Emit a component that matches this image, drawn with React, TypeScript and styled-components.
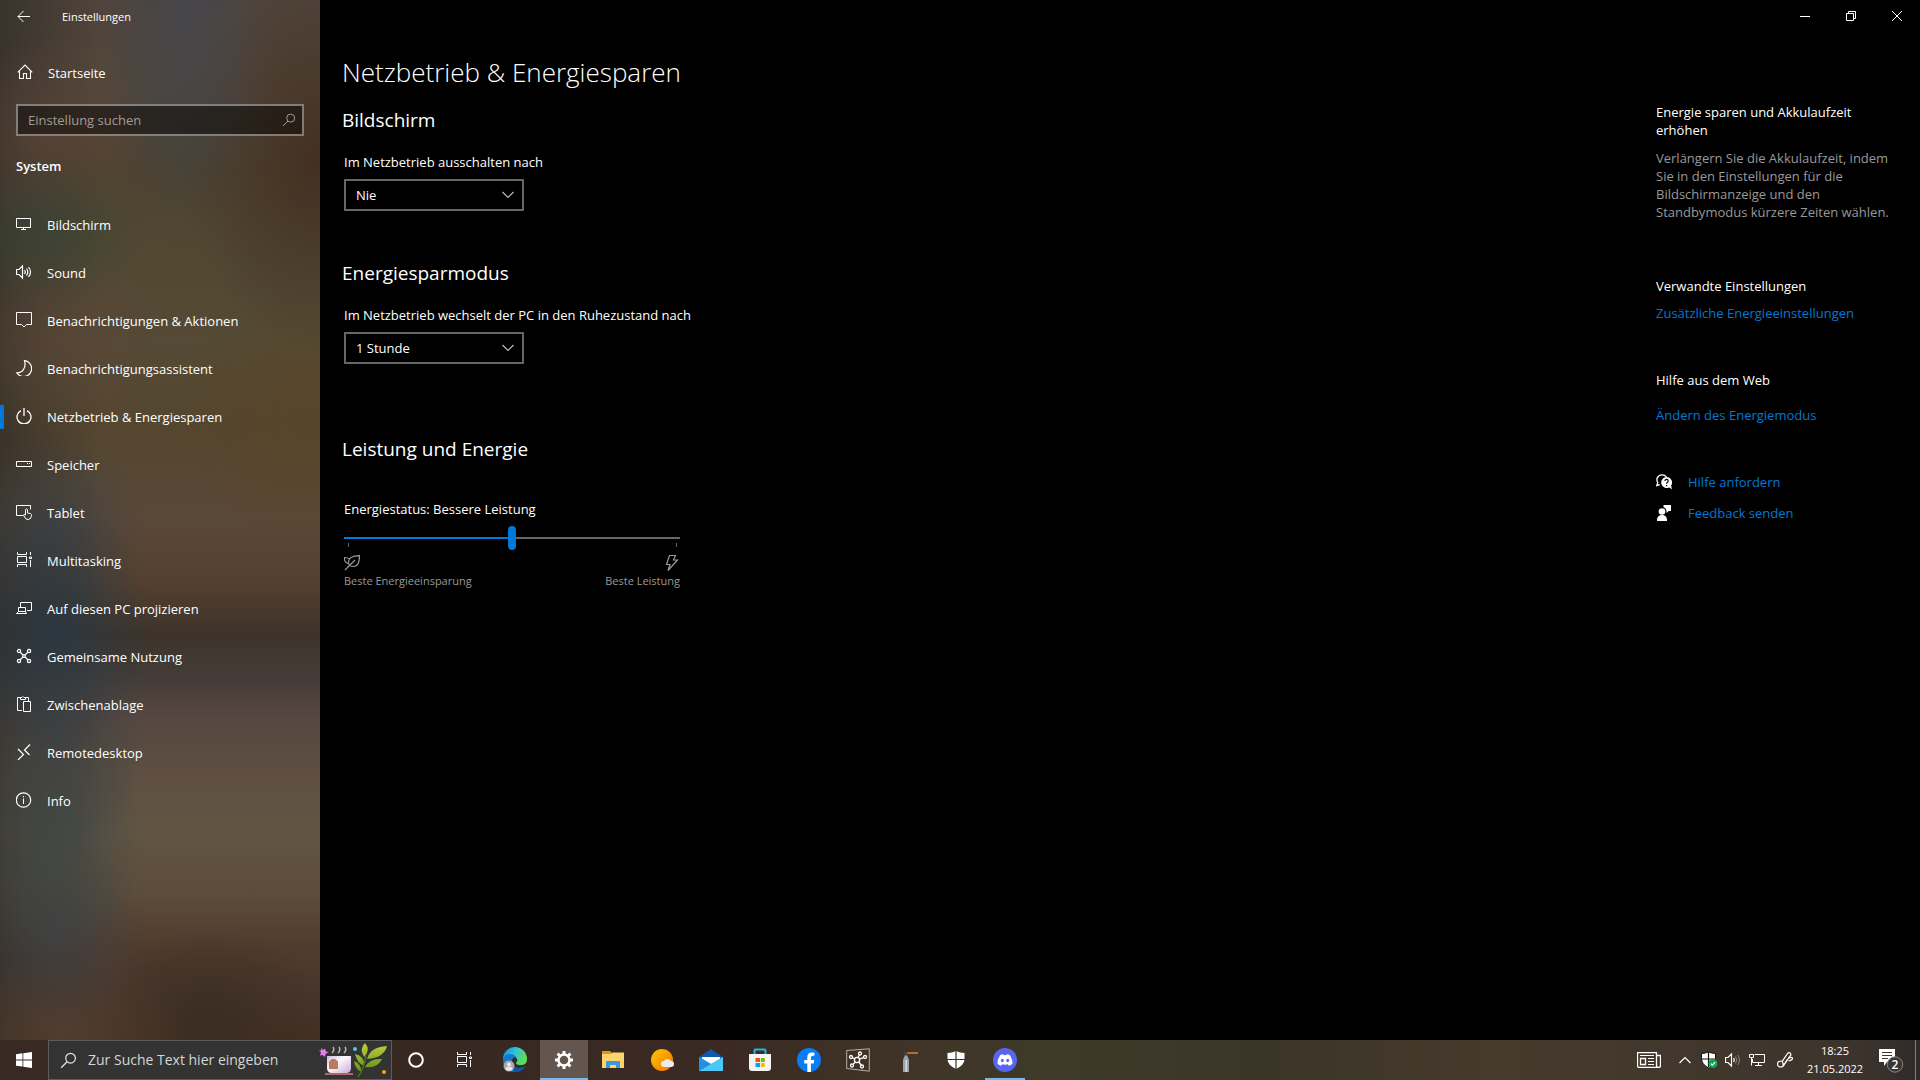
import React, { useState } from 'react';
import styled, { createGlobalStyle, css } from 'styled-components';

const accent = '#0078d7';

const GlobalStyle = createGlobalStyle`
  *, *::before, *::after { box-sizing: border-box; }
  html, body { margin: 0; background: #000; }
  body, button, input, select {
    font-family: 'Open Sans', 'Noto Sans', 'Liberation Sans', sans-serif;
    font-size: 13px;
    line-height: 18px;
    color: #fff;
  }
  h1, h2, h3, p, ul { margin: 0; padding: 0; }
  ul { list-style: none; }
  svg { display: block; flex: none; }
`;

const Desktop = styled.div`
  min-height: 100vh;
  display: flex;
  flex-direction: column;
`;

const SettingsWindow = styled.div`
  flex: 1;
  display: flex;
  background: #000;
`;

/* ---------- navigation pane ---------- */

const Pane = styled.aside`
  width: 320px;
  flex: none;
  background:
    radial-gradient(ellipse 90px 180px at 185px 0, rgba(68, 70, 78, 0.85), transparent),
    radial-gradient(ellipse 90px 120px at 185px 130px, rgba(62, 66, 62, 0.6), transparent),
    radial-gradient(ellipse 100px 80px at 50px 230px, rgba(58, 68, 54, 0.75), transparent),
    radial-gradient(ellipse 100px 100px at 50px 140px, rgba(92, 68, 56, 0.7), transparent),
    radial-gradient(ellipse 100px 110px at 60px 340px, rgba(92, 70, 56, 0.7), transparent),
    radial-gradient(ellipse 100px 130px at 52px 625px, rgba(42, 56, 68, 0.9), transparent),
    radial-gradient(ellipse 90px 90px at 55px 525px, rgba(60, 66, 70, 0.7), transparent),
    radial-gradient(ellipse 90px 120px at 58px 740px, rgba(62, 66, 66, 0.8), transparent),
    radial-gradient(ellipse 90px 120px at 55px 835px, rgba(64, 72, 70, 0.85), transparent),
    radial-gradient(ellipse 90px 100px at 55px 930px, rgba(62, 66, 68, 0.85), transparent),
    radial-gradient(ellipse 130px 80px at 60px 1030px, rgba(84, 62, 48, 0.9), transparent),
    radial-gradient(ellipse 120px 90px at 210px 1020px, rgba(56, 44, 32, 0.8), transparent),
    radial-gradient(ellipse 140px 190px at 320px 160px, rgba(64, 44, 32, 0.85), transparent),
    radial-gradient(ellipse 130px 130px at 310px 420px, rgba(90, 68, 40, 0.8), transparent),
    linear-gradient(90deg, rgba(44, 42, 38, 0.65), transparent 100px),
    linear-gradient(
      #50443a 0, #54473a 9%, #51432f 16%, #514832 24%, #544a35 33%, #54462f 41%,
      #5a4838 50%, #54402f 56%, #3d332a 61%, #443c38 65%, #564740 69%, #5f5042 75%,
      #625542 80%, #5c4c3a 86%, #513b2e 91%, #47342a 96%, #442f23 100%
    );
`;

const PaneTitle = styled.div`
  height: 34px;
  display: flex;
  align-items: center;
  font-size: 11px;
`;

const BackButton = styled.button`
  width: 62px;
  height: 32px;
  padding: 0 0 0 17px;
  border: 0;
  background: none;
`;

const navRow = css`
  position: relative;
  display: flex;
  align-items: center;
  gap: 15px;
  height: 48px;
  padding: 0 16px;
  color: #fff;
  text-decoration: none;

  svg { margin-bottom: 2px; }
`;

const HomeLink = styled.a`
  ${navRow}
  margin-top: 15px;
  padding-left: 17px;
`;

const PaneSearch = styled.label`
  display: flex;
  align-items: center;
  height: 32px;
  margin: 7px 16px 20px;
  padding: 0 6px 0 10px;
  border: 2px solid rgba(255, 255, 255, 0.42);
  background: rgba(0, 0, 0, 0.45);
`;

const PlainInput = styled.input`
  flex: 1;
  min-width: 0;
  padding: 0;
  border: 0;
  outline: 0;
  background: none;

  &::placeholder { color: #a19c97; opacity: 1; }
`;

const PaneHeading = styled.h2`
  margin: 0 16px 25px;
  font-size: 13px;
  line-height: 20px;
  font-weight: 600;
`;

const NavLink = styled.a<{ $active?: boolean }>`
  ${navRow}

  &::before {
    content: '';
    position: absolute;
    left: 0;
    top: 12px;
    width: 4px;
    height: 24px;
    background: ${p => (p.$active ? accent : 'transparent')};
  }
`;

/* ---------- content ---------- */

const Content = styled.main`
  flex: 1;
  display: flex;
  flex-direction: column;
`;

const Caption = styled.div`
  display: flex;
  justify-content: flex-end;
  height: 32px;
`;

const CaptionButton = styled.button`
  width: 46px;
  display: grid;
  place-items: center;
  padding: 0;
  border: 0;
  background: none;
`;

const Columns = styled.div`
  display: flex;
  justify-content: space-between;
  padding: 0 16px 0 24px;
`;

const Page = styled.div`
  padding-top: 20px;
`;

const PageTitle = styled.h1`
  margin: 0 0 14px -2px;
  font-size: 26px;
  line-height: 40px;
  font-weight: 350;
`;

const Section = styled.section<{ $gap: number }>`
  margin-bottom: ${p => p.$gap}px;
`;

const SectionTitle = styled.h2<{ $gap?: number }>`
  margin: 0 0 ${p => p.$gap ?? 19}px -2px;
  font-size: 19px;
  line-height: 28px;
  font-weight: 400;
`;

const FieldLabel = styled.label`
  display: block;
  margin-bottom: 8px;
  line-height: 18px;
`;

const SelectBox = styled.div`
  position: relative;
  width: 180px;

  svg {
    position: absolute;
    right: 10px;
    top: 12px;
    pointer-events: none;
  }
`;

const Select = styled.select`
  display: block;
  width: 100%;
  height: 32px;
  padding: 0 30px 0 10px;
  border: 2px solid #666;
  border-radius: 0;
  background: #000;
  appearance: none;
`;

const PowerSlider = styled.div`
  width: 336px;
  max-width: 100%;
`;

const Range = styled.input<{ $value: number }>`
  display: block;
  width: 100%;
  height: 24px;
  margin: 0;
  appearance: none;
  background: linear-gradient(90deg, ${accent} ${p => p.$value}%, #666 ${p => p.$value}%)
    center / 100% 2px no-repeat;

  &::-webkit-slider-thumb {
    appearance: none;
    width: 8px;
    height: 24px;
    border-radius: 4px;
    background: ${accent};
  }
`;

const Ticks = styled.div`
  display: flex;
  justify-content: space-between;
  height: 4px;
  margin: -7px 3px 8px 4px;
  border: solid #666;
  border-width: 0 1px;
`;

const SliderEnds = styled.div`
  display: flex;
  justify-content: space-between;
  color: #999;
  font-size: 11px;
  line-height: 16px;
`;

const SliderEnd = styled.div<{ $right?: boolean }>`
  display: flex;
  flex-direction: column;
  align-items: ${p => (p.$right ? 'flex-end' : 'flex-start')};
  gap: 2px;
`;

const Related = styled.aside`
  width: 248px;
  padding-top: 71px;
`;

const RelatedGroup = styled.section<{ $gap: number; $after: number }>`
  display: flex;
  flex-direction: column;
  align-items: flex-start;
  gap: ${p => p.$gap}px;
  margin-bottom: ${p => p.$after}px;
`;

const RelatedTitle = styled.h3`
  font-size: 13px;
  line-height: 18px;
  font-weight: 400;
`;

const Hint = styled.p`
  color: #999;
`;

const Link = styled.a`
  display: flex;
  align-items: center;
  gap: 16px;
  color: ${accent};
  text-decoration: none;

  svg { color: #fff; }
`;

/* ---------- taskbar ---------- */

const Taskbar = styled.footer`
  display: flex;
  height: 40px;
  background: linear-gradient(
    90deg, #382a23 0, #372822 22%, #3a2a23 38%, #3f3327 46%, #3e3a29 55%,
    #3b3528 66%, #463a2c 78%, #41372c 88%, #3c332d 97%, #2f2a28 100%
  );
`;

const TaskButton = styled.button<{ $active?: boolean; $running?: boolean }>`
  position: relative;
  width: 48px;
  height: 40px;
  display: grid;
  place-items: center;
  padding: 0;
  border: 0;
  background: ${p => (p.$active ? '#64564f' : 'none')};

  &::after {
    content: '';
    position: absolute;
    bottom: 0;
    left: ${p => (p.$active ? 0 : 4)}px;
    right: ${p => (p.$active ? 0 : 4)}px;
    height: 2px;
    background: ${p => (p.$active || p.$running ? '#76b9ed' : 'transparent')};
  }
`;

const TaskSearch = styled.label`
  display: flex;
  align-items: center;
  width: 344px;
  padding: 0 4px 0 11px;
  border: 1px solid #5c5c5c;
  background: #333;
`;

const TaskSearchInput = styled(PlainInput)`
  margin-left: 11px;
  font-size: 14px;

  &::placeholder { color: #d6d6d6; }
`;

const Apps = styled.div`
  display: flex;
  gap: 1px;
  margin-left: 3px;
`;

const Tray = styled.div`
  display: flex;
  align-items: center;
  margin-left: auto;
`;

const TrayButton = styled.button<{ $w?: number }>`
  width: ${p => p.$w ?? 24}px;
  height: 40px;
  display: grid;
  place-items: center;
  padding: 0;
  border: 0;
  background: none;
`;

const Clock = styled.button`
  width: 68px;
  height: 40px;
  padding: 0;
  border: 0;
  background: none;
  font-size: 11px;
  text-align: center;
`;

const ShowDesktop = styled.button`
  width: 5px;
  height: 40px;
  padding: 0;
  border: 0;
  border-left: 1px solid #85807b;
  background: none;
`;

/* ---------- icons ---------- */

type IconProps = { size?: number; children: React.ReactNode };

const Icon = ({ size = 16, children }: IconProps) => (
  <svg width={size} height={size} viewBox="0 0 16 16" fill="none" stroke="currentColor" strokeWidth="1" aria-hidden="true">
    {children}
  </svg>
);

const SearchIcon = ({ size = 14, color = '#a19c97' }: { size?: number; color?: string }) => (
  <svg width={size} height={size} viewBox="0 0 14 14" fill="none" stroke={color} aria-hidden="true">
    <circle cx="8.7" cy="5.1" r="4" />
    <path d="M5.9 8 .9 13" />
  </svg>
);

const Chevron = () => (
  <svg width="12" height="8" viewBox="0 0 12 8" fill="none" stroke="#bbb" strokeWidth="1.200" aria-hidden="true">
    <path d="M.5 1 6 6.500 11.500 1" />
  </svg>
);

const TaskViewShape = () => (
  <path d="M1.500 0v2.500h9V0M1.500 15v-2.500h9V15M1.500 4.500h9v6h-9zM14.500 0v3M14.500 8v7M13.500 5h2v1.500h-2z" />
);

const navItems: { label: string; icon: React.ReactNode }[] = [
  { label: 'Bildschirm', icon: <path d="M.5 2.500h14v9H.5zM7.500 11.500v2M5 13.500h5" /> },
  {
    label: 'Sound',
    icon: (
      <path
        d="M.5 5.500h2.500L6.500 2v12L3 10.500H.5zM8.500 6q1.500 2 0 4M10.500 4.500q2.500 3.500 0 7M12.500 3q4 5 0 10"
        strokeWidth="1.200"
      />
    ),
  },
  { label: 'Benachrichtigungen & Aktionen', icon: <path d="M.5 .5h15v12h-5L8 15l-2.500-2.500h-5z" /> },
  {
    label: 'Benachrichtigungsassistent',
    icon: <path d="M8.500 .6A8 8 0 1 1 .8 12.800C6.500 13 10.500 7.500 8.500 .6z" strokeWidth="1.200" />,
  },
  {
    label: 'Netzbetrieb & Energiesparen',
    icon: <path d="M5 2.600A7 7 0 1 0 11 2.600M8 0v8" strokeWidth="1.300" />,
  },
  { label: 'Speicher', icon: <path d="M.5 5.500h15v5H.5zM11 7.500h1M13 7.500h1" /> },
  {
    label: 'Tablet',
    icon: (
      <path d="M7 11.500H.5v-10h14v4M9.500 11V5.500q1-1.500 2 0V9l3 .5q1.200.5 1 2-.2 4-3.500 4-2.500 0-3.500-2.500l-1-2q.5-1.500 2 0z" />
    ),
  },
  { label: 'Multitasking', icon: <TaskViewShape /> },
  {
    label: 'Auf diesen PC projizieren',
    icon: <path d="M4.500 7V2.500h11v8H11M2.500 12V7.500h7V12M.5 13.500h10L9.500 11.500h-7z" />,
  },
  {
    label: 'Gemeinsame Nutzung',
    icon: (
      <g strokeWidth="1.300">
        <circle cx="3" cy="3" r="1.600" />
        <circle cx="13" cy="3" r="1.600" />
        <circle cx="3" cy="13" r="1.600" />
        <circle cx="13" cy="13" r="1.600" />
        <circle cx="8" cy="8" r="1.300" />
        <path d="m4.200 4.200 2.900 2.900M11.800 4.200 8.900 7.100M4.200 11.800l2.900-2.900M11.800 11.800 8.900 8.900" />
      </g>
    ),
  },
  {
    label: 'Zwischenablage',
    icon: <path d="M6 14.500H1.500v-13h3M12.500 5V1.500h-3M4.500 3.500v-2h1.500q1-2 2 0h1.500v2zM7.500 5.500h7v10h-7z" />,
  },
  { label: 'Remotedesktop', icon: <path d="m2 5 5.500 5.500L2 16M14 .5 8.500 6l5 5" strokeWidth="1.200" /> },
  {
    label: 'Info',
    icon: (
      <>
        <circle cx="7.500" cy="8" r="7.200" strokeWidth="1.200" />
        <path d="M7.500 6.500V12M7.500 4v1.200" />
      </>
    ),
  },
];

const HelpIcon = () => (
  <svg width="16" height="16" viewBox="0 0 16 16" aria-hidden="true">
    <path d="M6 .8a5 5 0 0 0-4.200 7.800L.8 11.500l3-.8" fill="none" stroke="#fff" strokeWidth="1.300" />
    <path d="M6 .8c2 0 3.500.8 4.500 2" fill="none" stroke="#fff" strokeWidth="1.300" />
    <path d="M10.500 3a5.500 5.500 0 1 0 2.700 10.400l2.800 1.800-.9-3.600A5.500 5.500 0 0 0 10.500 3z" fill="#fff" />
    <path d="M8.900 7q.2-1.600 1.700-1.600T12.200 7q0 .9-.9 1.400-.7.500-.7 1.300M10.600 11v1.300" fill="none" stroke="#000" strokeWidth="1.200" />
  </svg>
);

const FeedbackIcon = () => (
  <svg width="16" height="16" viewBox="0 0 16 16" fill="#fff" aria-hidden="true">
    <circle cx="6" cy="6.500" r="3.300" />
    <path d="M1 16v-1.500q.5-4.500 5-4.500t5 4.500V16zM7.500 0H15v6h-2.200L10.500 8V6Q10 3 7.500 2z" />
  </svg>
);

const LeafIcon = () => (
  <Icon>
    <path d="M15.500 .7Q15.500 11.500 9.500 11.500q-5 0-5-4.500 0-6 11-6.300zM1 15 11 5M4 8.500Q-.3 7 .5 2.500q3 0 5 1.500" strokeWidth="1.200" />
  </Icon>
);

const BoltIcon = () => (
  <Icon>
    <path d="M5.500 .5h6L9.500 5h4L4 15.500 6 9.500H2.500z" strokeWidth="1.200" />
  </Icon>
);

const WindowsLogo = () => (
  <svg width="16" height="16" viewBox="0 0 16 16" fill="#fff" aria-hidden="true">
    <path d="M0 2.200 6.500 1.300v6.200H0zM7.300 1.200 16 0v7.500H7.300zM0 8.400h6.500v6.200L0 13.700zM7.300 8.400H16V16l-8.700-1.200z" />
  </svg>
);

const TeaArt = () => (
  <svg width="70" height="36" viewBox="0 0 70 36" aria-hidden="true">
    <defs>
      <linearGradient id="cup" x1="0" y1="0" x2="1" y2="1">
        <stop offset="0" stopColor="#c9bfd6" />
        <stop offset="0.400" stopColor="#fdf8ff" />
        <stop offset="1" stopColor="#c4add8" />
      </linearGradient>
      <linearGradient id="leaf" x1="0" y1="0" x2="0" y2="1">
        <stop offset="0" stopColor="#c0d23a" />
        <stop offset="1" stopColor="#5f8c1e" />
      </linearGradient>
    </defs>
    <path d="M4 6 6.500 8 8 6.500 9 9.500 11.500 10 8.500 12 8 15 5.500 13 3 13.500 4 10.500 2 8.500 4.500 8.500z" fill="#e67df0" />
    <circle cx="38" cy="7" r="2" fill="#57c7dd" />
    <circle cx="67" cy="30" r="2" fill="#f5a614" />
    <path d="M15 11q3-3 1-6M21 11q3-3 1-6M27 11q3-3 1-6" stroke="#b8b8bb" strokeWidth="1.500" fill="none" />
    <path d="M10 14h24v12q0 5-5 5H15q-5 0-5-5z" fill="url(#cup)" />
    <path d="M12 19.500l3-2.500h3l3 2.500v7.500h-9z" fill="#b97a5f" />
    <path d="M8 32h28" stroke="#b1656a" strokeWidth="2" />
    <g fill="url(#leaf)">
      <path d="M47 15Q42 7 48 1q6 7-1 14zM50 17Q53 5 70 4q-3 12-20 13zM47 24q-7-3-9-12 10 2 9 12zM48 25q5-9 17-8-5 10-17 8zM44 30q-6-3-7-11 8 3 7 11z" />
    </g>
    <path d="M41 35q6-8 8-22" stroke="#4f701d" strokeWidth="1.500" fill="none" />
  </svg>
);

const EdgeIcon = () => (
  <svg width="26" height="26" viewBox="0 0 26 26" aria-hidden="true">
    <defs>
      <linearGradient id="edgeTop" x1="0" y1="0" x2="1" y2="0.300">
        <stop offset="0" stopColor="#1687d9" />
        <stop offset="0.550" stopColor="#2fc5de" />
        <stop offset="1" stopColor="#5fdc50" />
      </linearGradient>
    </defs>
    <path d="M1 12A12 12 0 0 1 25 12q0 6-6 6-5 0-5-2 2-2 1-4-3-5-8-4-4 1-6 4z" fill="url(#edgeTop)" />
    <path d="M1 12q2-5 7-5 4 0 6 3-5 1-4 6 1 5 7 6 3 0 6-2-4 5-10 5A12 12 0 0 1 1 12z" fill="#1379cc" />
    <path d="M10 14q0 6 6 7 4 0 7-2-3 6-10 6-6-3-3-11z" fill="#0c59a4" />
    <circle cx="7" cy="19" r="5.500" fill="#a9a9a9" />
    <circle cx="7" cy="17.500" r="2" fill="#e8e8e8" />
    <path d="M3.500 22.500q0-3 3.500-3t3.500 3q-3.500 2.500-7 0z" fill="#e8e8e8" />
  </svg>
);

const GearIcon = () => (
  <svg width="20" height="20" viewBox="0 0 20 20" fill="none" stroke="#fff" aria-hidden="true">
    <circle cx="10" cy="10" r="5.500" strokeWidth="2.400" />
    <path
      d="M10 1v3M10 16v3M1 10h3M16 10h3M3.600 3.600l2.100 2.100M14.300 14.300l2.100 2.100M3.600 16.400l2.100-2.100M14.300 5.700l2.100-2.100"
      strokeWidth="3"
    />
  </svg>
);

const FolderIcon = () => (
  <svg width="24" height="20" viewBox="0 0 24 20" aria-hidden="true">
    <path d="M1 1h8l2 2h12v5H1z" fill="#d99a10" />
    <path d="M1 4h9l1.500-1.500H23V18H1z" fill="#fcd46b" />
    <path d="M5 18v-6q0-1 1-1h12q1 0 1 1v6h-4v-3H9v3z" fill="#3a98dc" />
  </svg>
);

const WeatherIcon = () => (
  <svg width="26" height="26" viewBox="0 0 26 26" aria-hidden="true">
    <defs>
      <linearGradient id="sun" x1="0" y1="0" x2="1" y2="1">
        <stop offset="0" stopColor="#ffc800" />
        <stop offset="1" stopColor="#f37300" />
      </linearGradient>
    </defs>
    <circle cx="13" cy="13" r="11" fill="url(#sun)" />
    <path d="M15 20a3 3 0 0 1 0-6 4 4 0 0 1 7 0 3 3 0 0 1 0 6z" fill="#ececec" />
  </svg>
);

const MailIcon = () => (
  <svg width="24" height="24" viewBox="0 0 24 24" aria-hidden="true">
    <path d="M0 9 12 1l12 8v3H0z" fill="#0f59a6" />
    <path d="M3 9h18v8H3z" fill="#fff" />
    <path d="M0 9l12 7 12-7v14H0z" fill="#2cb0ec" />
    <path d="M0 23 24 9v14z" fill="#4cc8f8" />
    <path d="M0 9l12 7L0 23z" fill="#2390df" />
  </svg>
);

const StoreIcon = () => (
  <svg width="24" height="24" viewBox="0 0 24 24" aria-hidden="true">
    <path d="M6.500 7V2.500q0-1 1-1h9q1 0 1 1V7" fill="none" stroke="#27b1e6" strokeWidth="2" />
    <path d="M1 6h22v14q0 3-3 3H4q-3 0-3-3z" fill="#f4f4f4" />
    <path d="M7.500 10H12v4H7.500z" fill="#f25022" />
    <path d="M12.800 10h4v4h-4z" fill="#7fba00" />
    <path d="M7.500 15H12v4H7.500z" fill="#00a4ef" />
    <path d="M12.800 15h4v4h-4z" fill="#ffb900" />
  </svg>
);

const FacebookIcon = () => (
  <svg width="24" height="24" viewBox="0 0 24 24" aria-hidden="true">
    <circle cx="12" cy="12" r="12" fill="#0a7cf4" />
    <path d="M10.300 24v-8.500H7.200V12h3.100V9.300q0-4.700 4.600-4.700 1.400 0 2.500.2v3h-1.500q-2 0-2 1.900V12h3.300l-.5 3.500h-2.800V24z" fill="#fff" />
  </svg>
);

const NetworkIcon = () => (
  <svg width="24" height="24" viewBox="0 0 24 24" fill="none" stroke="#fff" aria-hidden="true">
    <path d="M.7 2.500 23.300 .8v22.400L.7 20.500z" stroke="#b9aea6" />
    <g strokeWidth="1.300">
      <circle cx="11" cy="12" r="2.600" />
      <circle cx="5" cy="9" r="1.500" />
      <circle cx="14" cy="5.500" r="1.500" />
      <circle cx="19" cy="9" r="1.500" />
      <circle cx="6" cy="17.500" r="1.500" />
      <circle cx="16" cy="18.500" r="1.500" />
      <path d="m8.600 11-2.200-1.200M12 9.500l1.300-2.600M13.500 11.200l4-1.600M9.400 14l-2.300 2.400M12.800 14l2.300 3" />
    </g>
  </svg>
);

const ToolIcon = () => (
  <svg width="24" height="24" viewBox="0 0 24 24" aria-hidden="true">
    <path d="M12 5h11" stroke="#bb6c2a" strokeWidth="2" />
    <path d="M8 24V12l2-5h2l2 5v12z" fill="#9ba2ad" />
    <path d="M10.500 24V12H12v12z" fill="#d6dbe2" />
    <path d="M9.500 4h3v3.500h-3z" fill="#444" />
  </svg>
);

const DefenderIcon = () => (
  <svg width="18" height="18" viewBox="0 0 18 18" aria-hidden="true">
    <path d="M9 0q4 2 8.500 2v6q0 6-8.500 10Q.5 14 .5 8V2Q5 2 9 0z" fill="#fff" />
    <path d="M9 0v18M0 8.500h18" stroke="#3d3227" strokeWidth="1.200" />
  </svg>
);

const DiscordIcon = () => (
  <svg width="24" height="24" viewBox="0 0 24 24" aria-hidden="true">
    <circle cx="12" cy="12" r="12" fill="#5865f2" />
    <path d="M7 7.200q1.800-.9 3.200-1l.5 1q1.300-.2 2.600 0l.5-1q1.400.1 3.200 1 2.700 4.300 2.500 8.600-1.600 1.300-3.700 1.900l-.9-1.500q-2.900.9-5.800 0l-.9 1.500q-2.100-.6-3.700-1.900Q4.300 11.500 7 7.200z" fill="#fff" />
    <ellipse cx="9.300" cy="12.500" rx="1.500" ry="1.700" fill="#5865f2" />
    <ellipse cx="14.700" cy="12.500" rx="1.500" ry="1.700" fill="#5865f2" />
  </svg>
);

const apps: { name: string; icon: React.ReactNode; active?: boolean; running?: boolean }[] = [
  { name: 'Microsoft Edge', icon: <EdgeIcon /> },
  { name: 'Einstellungen', icon: <GearIcon />, active: true },
  { name: 'Explorer', icon: <FolderIcon /> },
  { name: 'Wetter', icon: <WeatherIcon /> },
  { name: 'Mail', icon: <MailIcon /> },
  { name: 'Microsoft Store', icon: <StoreIcon /> },
  { name: 'Facebook', icon: <FacebookIcon /> },
  { name: 'Netzwerk', icon: <NetworkIcon /> },
  { name: 'Werkzeug', icon: <ToolIcon /> },
  { name: 'Windows-Sicherheit', icon: <DefenderIcon /> },
  { name: 'Discord', icon: <DiscordIcon />, running: true },
];

const NewsIcon = () => (
  <svg width="24" height="16" viewBox="0 0 24 16" fill="none" stroke="#fff" aria-hidden="true">
    <path d="M19.500 3.500h4v10q0 2-2 2h-19q-2 0-2-2V.5h19v13q0 2 2 2" strokeWidth="1.300" />
    <path d="M3 3.500h14M11 6.500h6M11 9.500h6M11 12.500h6" />
    <path d="M3.500 6.500h5v6h-5z" strokeWidth="1.300" />
  </svg>
);

const TrayShield = () => (
  <svg width="18" height="18" viewBox="0 0 18 18" aria-hidden="true">
    <path d="M8.500 .8q3 1.700 7 1.700v5q0 5.500-7 9.500-7-4-7-9.500v-5q4 0 7-1.700z" fill="#fff" stroke="#111" />
    <path d="M8.500 1v15M1.500 8h14" stroke="#111" strokeWidth="1.200" />
    <circle cx="13" cy="12.500" r="4.500" fill="#10a353" />
    <path d="m10.800 12.600 1.600 1.600 2.800-3" fill="none" stroke="#fff" strokeWidth="1.200" />
  </svg>
);

const SpeakerIcon = () => (
  <svg width="16" height="16" viewBox="0 0 16 16" fill="none" stroke="#fff" aria-hidden="true">
    <path d="M.5 5.500H3L6.500 2v12L3 10.500H.5zM8.500 6q1.500 2 0 4" strokeWidth="1.200" />
    <path d="M10.500 4.500q2.500 3.500 0 7M12.500 3q4 5 0 10" stroke="#8d867f" />
  </svg>
);

const MonitorNetIcon = () => (
  <svg width="16" height="16" viewBox="0 0 16 16" fill="none" stroke="#fff" aria-hidden="true">
    <path d="M5.500 2.500h10v8h-12V7M9.500 10.500v3M6 13.500h7M.5 2.500h4v3h-4zM2.500 5.500v8" />
  </svg>
);

const PenIcon = () => (
  <svg width="16" height="16" viewBox="0 0 16 16" fill="none" stroke="#fff" strokeWidth="1.200" aria-hidden="true">
    <path d="M6 12.500 5.500 9 11 1q1.500-1 2.500.5T13 4l-5 7.500zM5 9Q.5 9 .5 12t3 3q3 0 4-3 1.500-3.500 4-5.500t4-.5q.5 2-4 3" />
  </svg>
);

const NoticeIcon = () => (
  <svg width="26" height="26" viewBox="0 0 26 26" aria-hidden="true">
    <path d="M0 2h16v13H8l-3 4v-4H0z" fill="#fff" />
    <path d="M3 5.500h10M3 8.500h10M3 11.500h6" stroke="#3c342e" />
    <circle cx="16" cy="17.500" r="7.700" fill="#3a3634" stroke="#8b8784" />
    <text x="16" y="21.500" fill="#fff" fontSize="12" fontWeight="600" textAnchor="middle">2</text>
  </svg>
);

export default function App() {
  const [power, setPower] = useState(50);

  return (
    <>
      <GlobalStyle />
      <Desktop>
        <SettingsWindow>
          <Pane>
            <PaneTitle>
              <BackButton aria-label="Zurück">
                <svg width="14" height="12" viewBox="0 0 14 12" fill="none" stroke="#fff" aria-hidden="true">
                  <path d="M6.500 0 1 5.500 6.500 11M1 5.500h12" />
                </svg>
              </BackButton>
              Einstellungen
            </PaneTitle>
            <HomeLink href="#start">
              <Icon>
                <path d="M.7 8.300 8 1l7.300 7.300M2.500 7.500v7h4v-5h3v5h4v-7" strokeWidth="1.100" />
              </Icon>
              Startseite
            </HomeLink>
            <PaneSearch>
              <PlainInput type="text" aria-label="Einstellung suchen" placeholder="Einstellung suchen" />
              <SearchIcon />
            </PaneSearch>
            <PaneHeading>System</PaneHeading>
            <nav>
              <ul>
                {navItems.map(item => (
                  <li key={item.label}>
                    <NavLink href="#system" $active={item.label === 'Netzbetrieb & Energiesparen'}>
                      <Icon>{item.icon}</Icon>
                      {item.label}
                    </NavLink>
                  </li>
                ))}
              </ul>
            </nav>
          </Pane>

          <Content>
            <Caption>
              <CaptionButton aria-label="Minimieren">
                <svg width="10" height="10" viewBox="0 0 10 10" stroke="#fff"><path d="M0 5.500h10" /></svg>
              </CaptionButton>
              <CaptionButton aria-label="Verkleinern">
                <svg width="10" height="10" viewBox="0 0 10 10" fill="none" stroke="#fff">
                  <path d="M.5 2.500h7v7h-7zM2.500 2.500v-2h7v7h-2" />
                </svg>
              </CaptionButton>
              <CaptionButton aria-label="Schließen">
                <svg width="10" height="10" viewBox="0 0 10 10" stroke="#fff"><path d="m0 0 10 10M10 0 0 10" /></svg>
              </CaptionButton>
            </Caption>

            <Columns>
              <Page>
                <PageTitle>Netzbetrieb &amp; Energiesparen</PageTitle>

                <Section $gap={48}>
                  <SectionTitle>Bildschirm</SectionTitle>
                  <FieldLabel htmlFor="screen-off">Im Netzbetrieb ausschalten nach</FieldLabel>
                  <SelectBox>
                    <Select id="screen-off" defaultValue="Nie">
                      <option>Nie</option>
                      <option>1 Stunde</option>
                    </Select>
                    <Chevron />
                  </SelectBox>
                </Section>

                <Section $gap={71}>
                  <SectionTitle>Energiesparmodus</SectionTitle>
                  <FieldLabel htmlFor="sleep-after">Im Netzbetrieb wechselt der PC in den Ruhezustand nach</FieldLabel>
                  <SelectBox>
                    <Select id="sleep-after" defaultValue="1 Stunde">
                      <option>Nie</option>
                      <option>1 Stunde</option>
                    </Select>
                    <Chevron />
                  </SelectBox>
                </Section>

                <Section $gap={48}>
                  <SectionTitle $gap={37}>Leistung und Energie</SectionTitle>
                  <FieldLabel htmlFor="power-mode">Energiestatus: Bessere Leistung</FieldLabel>
                  <PowerSlider>
                    <Range
                      id="power-mode"
                      type="range"
                      value={power}
                      $value={power}
                      onChange={event => setPower(Number(event.target.value))}
                    />
                    <Ticks />
                    <SliderEnds>
                      <SliderEnd>
                        <LeafIcon />
                        Beste Energieeinsparung
                      </SliderEnd>
                      <SliderEnd $right>
                        <BoltIcon />
                        Beste Leistung
                      </SliderEnd>
                    </SliderEnds>
                  </PowerSlider>
                </Section>
              </Page>

              <Related>
                <RelatedGroup $gap={10} $after={56}>
                  <RelatedTitle>Energie sparen und Akkulaufzeit erhöhen</RelatedTitle>
                  <Hint>
                    Verlängern Sie die Akkulaufzeit, indem Sie in den Einstellungen für die Bildschirmanzeige und den
                    Standbymodus kürzere Zeiten wählen.
                  </Hint>
                </RelatedGroup>
                <RelatedGroup $gap={9} $after={49}>
                  <RelatedTitle>Verwandte Einstellungen</RelatedTitle>
                  <Link href="#energie">Zusätzliche Energieeinstellungen</Link>
                </RelatedGroup>
                <RelatedGroup $gap={17} $after={49}>
                  <RelatedTitle>Hilfe aus dem Web</RelatedTitle>
                  <Link href="#energiemodus">Ändern des Energiemodus</Link>
                </RelatedGroup>
                <RelatedGroup $gap={13} $after={0}>
                  <Link href="#hilfe">
                    <HelpIcon />
                    Hilfe anfordern
                  </Link>
                  <Link href="#feedback">
                    <FeedbackIcon />
                    Feedback senden
                  </Link>
                </RelatedGroup>
              </Related>
            </Columns>
          </Content>
        </SettingsWindow>

        <Taskbar>
          <TaskButton aria-label="Start">
            <WindowsLogo />
          </TaskButton>
          <TaskSearch>
            <SearchIcon size={17} color="#e6e6e6" />
            <TaskSearchInput
              type="text"
              aria-label="Zur Suche Text hier eingeben"
              placeholder="Zur Suche Text hier eingeben"
            />
            <TeaArt />
          </TaskSearch>
          <TaskButton aria-label="Cortana">
            <svg width="16" height="16" viewBox="0 0 16 16" fill="none" stroke="#fff" strokeWidth="2">
              <circle cx="8" cy="8" r="6.800" />
            </svg>
          </TaskButton>
          <TaskButton aria-label="Aktive Anwendungen">
            <Icon>
              <TaskViewShape />
            </Icon>
          </TaskButton>
          <Apps>
            {apps.map(app => (
              <TaskButton key={app.name} aria-label={app.name} $active={app.active} $running={app.running}>
                {app.icon}
              </TaskButton>
            ))}
          </Apps>
          <Tray>
            <TrayButton $w={48} aria-label="Nachrichten">
              <NewsIcon />
            </TrayButton>
            <TrayButton aria-label="Ausgeblendete Symbole">
              <svg width="12" height="8" viewBox="0 0 12 8" fill="none" stroke="#fff" strokeWidth="1.200">
                <path d="M.5 7 6 1.500 11.500 7" />
              </svg>
            </TrayButton>
            <TrayButton aria-label="Sicherheit">
              <TrayShield />
            </TrayButton>
            <TrayButton aria-label="Lautstärke">
              <SpeakerIcon />
            </TrayButton>
            <TrayButton aria-label="Netzwerkverbindung">
              <MonitorNetIcon />
            </TrayButton>
            <TrayButton $w={32} aria-label="Windows Ink">
              <PenIcon />
            </TrayButton>
            <Clock>
              18:25
              <br />
              21.05.2022
            </Clock>
            <TrayButton $w={46} aria-label="Benachrichtigungen">
              <NoticeIcon />
            </TrayButton>
            <ShowDesktop aria-label="Desktop anzeigen" />
          </Tray>
        </Taskbar>
      </Desktop>
    </>
  );
}
